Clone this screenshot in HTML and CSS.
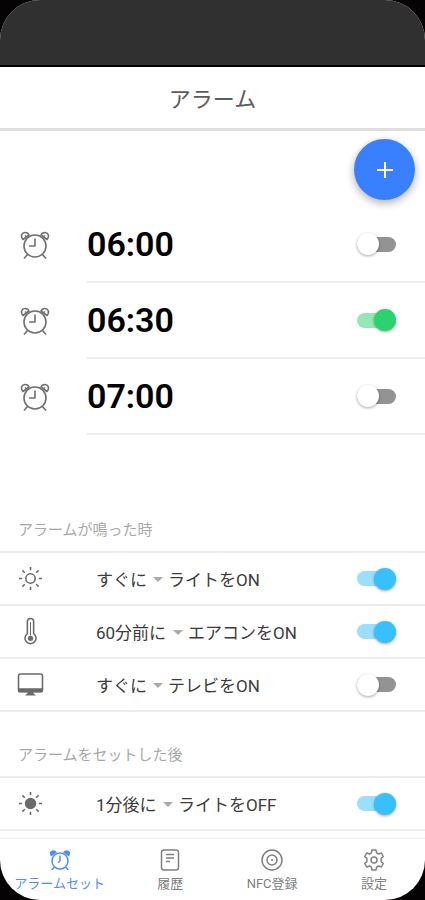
FILE: index.html
```html
<!DOCTYPE html>
<html lang="ja">
<head>
<meta charset="utf-8">
<meta name="viewport" content="width=device-width, initial-scale=1">
<title>アラーム</title>
<link rel="stylesheet" href="styles.css">
</head>
<body>
<svg class="defs" aria-hidden="true">
  <symbol id="alarm" viewBox="0 0 30 30">
    <circle cx="15" cy="16" r="11"/>
    <path d="M15 8.500V16H9M7.500 24.500L4 28.500M22.500 24.500L26 28.500"/>
    <path d="M3 9.500C0 6 2 2.500 5 2.500c2 0 3.500 1 4 2.500zM27 9.500C30 6 28 2.500 25 2.500c-2 0-3.500 1-4 2.500zM5 5.500l2 2M25 5.500l-2 2"/>
  </symbol>
  <symbol id="rays" viewBox="0 0 24 24">
    <path d="M12 1v3M12 20v3M1 12h3M20 12H23M4.200 4.200l2.300 2.300M17.500 17.500l2.300 2.300M19.800 4.200l-2.300 2.300M6.500 17.500l-2.300 2.300"/>
  </symbol>
</svg>
<div class="app">
  <div class="status"></div>
  <header class="header"><h1>アラーム</h1></header>
  <main>
    <div class="toolbar">
      <button class="fab" type="button" aria-label="追加"><svg viewBox="0 0 18 18"><path d="M9 1v16M1 9h16"/></svg></button>
    </div>
    <ul class="alarms">
      <li class="alarm"><svg class="clock"><use href="#alarm"/></svg><div class="alarm-body"><label for="a1">06:00</label><input class="switch" type="checkbox" id="a1"></div></li>
      <li class="alarm"><svg class="clock"><use href="#alarm"/></svg><div class="alarm-body"><label for="a2">06:30</label><input class="switch green" type="checkbox" id="a2" checked></div></li>
      <li class="alarm"><svg class="clock"><use href="#alarm"/></svg><div class="alarm-body"><label for="a3">07:00</label><input class="switch" type="checkbox" id="a3"></div></li>
    </ul>
    <section class="group">
      <h2>アラームが鳴った時</h2>
      <ul class="actions">
        <li class="action">
          <svg class="icon" viewBox="0 0 24 24"><use href="#rays"/><circle cx="12" cy="12" r="4.500"/></svg>
          <div class="rule"><select aria-label="ライトのタイミング"><option>すぐに</option></select><span class="caret"></span><label for="b1">ライトをON</label></div>
          <input class="switch" type="checkbox" id="b1" checked>
        </li>
        <li class="action">
          <svg class="icon" viewBox="0 0 24 24"><path d="M9 14V2.500a3 3 0 0 1 6 0V14a5.300 5.300 0 1 1-6 0z"/><path class="thin" d="M12 3v13"/><circle class="solid" cx="12" cy="18.500" r="2.500"/></svg>
          <div class="rule"><select aria-label="エアコンのタイミング"><option>60分前に</option></select><span class="caret"></span><label for="b2">エアコンをON</label></div>
          <input class="switch" type="checkbox" id="b2" checked>
        </li>
        <li class="action">
          <svg class="icon" viewBox="0 0 24 24"><rect x="0.500" y="2" width="23" height="17" rx="2"/><path class="solid" d="M0 15.500h24V18q0 1.500-2 1.500H2Q0 19.500 0 18zM9.500 19h5l.8 2 1.700 1v.6H7V22l1.700-1z"/></svg>
          <div class="rule"><select aria-label="テレビのタイミング"><option>すぐに</option></select><span class="caret"></span><label for="b3">テレビをON</label></div>
          <input class="switch" type="checkbox" id="b3">
        </li>
      </ul>
    </section>
    <section class="group">
      <h2>アラームをセットした後</h2>
      <ul class="actions">
        <li class="action">
          <svg class="icon" viewBox="0 0 24 24"><use href="#rays"/><circle class="solid" cx="12" cy="12" r="5.500"/></svg>
          <div class="rule"><select aria-label="ライトを消すタイミング"><option>1分後に</option></select><span class="caret"></span><label for="c1">ライトをOFF</label></div>
          <input class="switch" type="checkbox" id="c1" checked>
        </li>
      </ul>
    </section>
  </main>
  <nav class="tabs">
    <a class="tab active" href="#alarm-set"><svg viewBox="0 0 22 22"><circle cx="11" cy="12" r="8"/><path d="M11 6.500V12l-2 1.500M5.500 18l-3 3M16.500 18l3 3"/><path class="solid" d="M2 7.500Q-.5 3.500 2.500 1.800T8 3.500zM20 7.500Q22.500 3.500 19.500 1.800T14 3.500z"/></svg>アラームセット</a>
    <a class="tab" href="#history"><svg viewBox="0 0 22 22"><rect x="2.500" y="1" width="17" height="20" rx="2.500"/><path d="M7 5.500h8M7 9h8M7 12.500h4"/></svg>履歴</a>
    <a class="tab" href="#nfc"><svg viewBox="0 0 22 22"><circle cx="11" cy="11" r="10"/><circle cx="11" cy="11" r="5"/><circle class="solid" cx="11" cy="11" r="1"/></svg>NFC登録</a>
    <a class="tab" href="#settings"><svg viewBox="0 0 22 22"><path d="M9 1h4l.6 2.900 1.900 1.100 2.800-1 2 3.500-2.200 1.900v3.200l2.200 1.900-2 3.500-2.800-1-1.900 1.100L13 21H9l-.6-2.900L6.500 17l-2.800 1-2-3.500 2.200-1.900V9.400L1.700 7.500l2-3.500 2.800 1 1.900-1.100z"/><circle cx="11" cy="11" r="3"/></svg>設定</a>
  </nav>
</div>
</body>
</html>
```
FILE: styles.css
```css
* { box-sizing: border-box; }
body {
  margin: 0;
  background: #060304;
  font-family: Roboto, "Noto Sans CJK JP", sans-serif;
  color: #3c3c3c;
}
.defs { display: none; }
svg { fill: none; stroke: currentColor; stroke-linejoin: round; }
.solid { fill: currentColor; stroke: none; }
.thin { stroke-width: 1; }
ul { list-style: none; margin: 0; padding: 0; }
.app {
  display: flex;
  flex-direction: column;
  min-height: 100vh;
  background: #fff;
  border-radius: 40px;
  overflow: hidden;
}
.status { height: 67px; background: #303030; border-bottom: 2px solid #000; }
.header {
  display: flex;
  align-items: center;
  justify-content: center;
  height: 64px;
  padding-top: 4px;
  border-bottom: 3px solid #dedede;
}
h1 { margin: 0; font-size: 22px; font-weight: 400; line-height: 32px; color: #5c5c5c; }
.toolbar { display: flex; justify-content: flex-end; height: 76px; padding: 8px 10px; }
.fab {
  display: grid;
  place-items: center;
  width: 61px;
  height: 61px;
  padding: 0;
  border: 0;
  border-radius: 50%;
  background: #3880ff;
  color: #fff;
  box-shadow: 0 3px 8px rgba(0, 0, 0, .32);
}
.fab svg { width: 18px; height: 18px; stroke-width: 2; }
.alarm { display: flex; align-items: center; height: 76px; padding-left: 20px; }
.clock { width: 30px; height: 30px; margin-right: 37px; color: #707070; stroke-width: 1.6; }
.alarm-body {
  display: flex;
  flex: 1;
  align-items: center;
  justify-content: space-between;
  height: 76px;
  padding-right: 29px;
  border-bottom: 2px solid #ededed;
  font-size: 34px;
  font-weight: 600;
  color: #000;
}
.switch {
  appearance: none;
  flex: none;
  display: flex;
  align-items: center;
  width: 39px;
  height: 15px;
  margin: 0;
  border-radius: 8px;
  background: #939393;
}
.switch::before {
  content: "";
  flex: none;
  width: 22px;
  height: 22px;
  border-radius: 50%;
  background: #fff;
  box-shadow: 0 1px 3px rgba(0, 0, 0, .35);
}
.switch:checked { justify-content: flex-end; background: #9bdffe; }
.switch:checked::before { background: #38bffe; }
.green:checked { background: #93e9b3; }
.green:checked::before { background: #2bd36e; }
.group { margin-bottom: 22px; }
.alarms + .group { padding-top: 74px; }
h2 {
  margin: 0;
  padding: 10px 18px;
  font-size: 15px;
  font-weight: 400;
  line-height: 22px;
  color: #a8a8a8;
}
.actions { border-top: 2px solid #ededed; }
.action {
  display: flex;
  align-items: center;
  height: 53px;
  padding: 0 29px 0 18px;
  border-bottom: 2px solid #ededed;
}
.icon { width: 25px; height: 25px; margin-right: 53px; color: #6a6a6a; stroke-width: 1.5; overflow: visible; }
.rule { display: flex; flex: 1; align-items: center; padding-top: 2px; font-size: 17px; line-height: 26px; }
select {
  appearance: none;
  margin: 0;
  padding: 0;
  border: 0;
  background: none;
  color: inherit;
  font: inherit;
}
.caret {
  margin: 0 5px 0 6px;
  border: 5px solid transparent;
  border-top-color: #aaa;
  border-bottom: 0;
}
.group:last-child { margin-bottom: 0; }
.tabs {
  display: grid;
  grid-template-columns: 1.17fr 1fr 1fr 1fr;
  margin-top: auto;
  padding: 10px 0 7px;
  border-top: 1px solid #f3f3f3;
}
.tab {
  display: flex;
  flex-direction: column;
  align-items: center;
  gap: 4px;
  font-size: 13px;
  line-height: 18px;
  color: #808080;
  text-decoration: none;
}
.tab svg { width: 22px; height: 22px; stroke-width: 1.5; }
.active { color: #4d8dff; }
```
